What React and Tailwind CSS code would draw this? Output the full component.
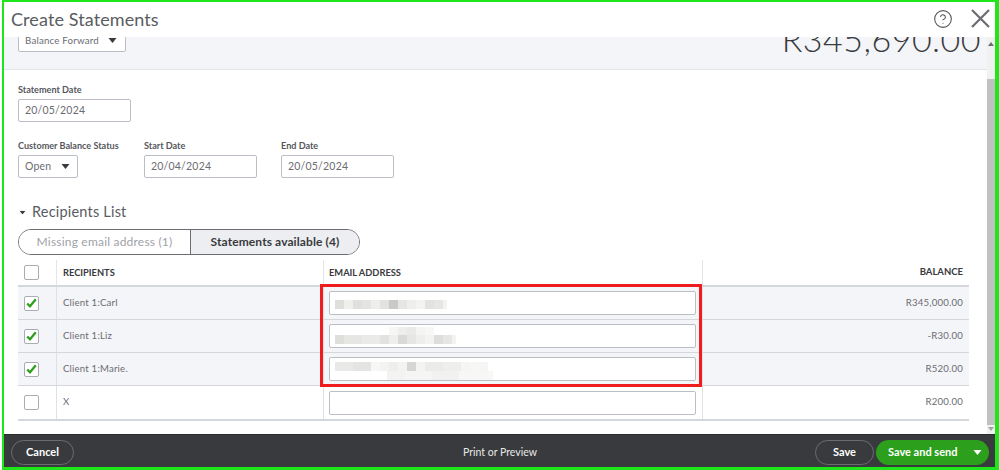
import { CircleHelp } from "lucide-react";

const rows = [
  { id: 1, name: "Client 1:Carl", balance: "R345,000.00", checked: true, blur: "carl" },
  { id: 2, name: "Client 1:Liz", balance: "-R30.00", checked: true, blur: "liz" },
  { id: 3, name: "Client 1:Marie.", balance: "R520.00", checked: true, blur: "marie" },
  { id: 4, name: "X", balance: "R200.00", checked: false, blur: null },
];

function Label({ children }) {
  return <div className="text-[9.1px] leading-[12px] font-bold text-[#55575c] mb-[3px] whitespace-nowrap">{children}</div>;
}

function DateInput({ value }) {
  return (
    <div className="w-[113px] h-[23px] border border-[#babec5] rounded-[2px] bg-white flex items-center pl-[6px] text-[10.5px] text-[#6b6c72] tracking-[0.2px]">
      {value}
    </div>
  );
}

function Caret({ className }) {
  return (
    <svg width="9" height="5" viewBox="0 0 9 5" className={className}>
      <path d="M0.5 0 L8.5 0 L4.5 5 Z" fill="currentColor" />
    </svg>
  );
}

function CheckBox({ checked }) {
  return (
    <div className="w-[15px] h-[15px] border border-[#a9acb2] rounded-[2px] bg-white flex items-center justify-center">
      {checked && (
        <svg width="11" height="10" viewBox="0 0 11 10">
          <path d="M1.2 5.4 L4 8.3 L9.8 1.2" fill="none" stroke="#2ca01c" strokeWidth="2.2" />
        </svg>
      )}
    </div>
  );
}

// pixelated email addresses
function Blur({ kind }) {
  if (kind === "carl") {
    return (
      <div className="h-full pl-[5px] pt-[8px]">
        <div className="flex h-[9px] blur-[0.5px]">
          <div className="w-[9px] bg-[#dededb]" />
          <div className="w-[9px] bg-[#efefed]" />
          <div className="w-[9px] bg-[#e0e0de]" />
          <div className="w-[9px] bg-[#e4e4e2]" />
          <div className="w-[9px] bg-[#eeeeec]" />
          <div className="w-[9px] bg-[#e2e2e0]" />
          <div className="w-[9px] bg-[#c9c9c7]" />
          <div className="w-[9px] bg-[#e6e6e4]" />
          <div className="w-[9px] bg-[#eeeeec]" />
          <div className="w-[9px] bg-[#f3f3f1]" />
          <div className="w-[9px] bg-[#e2e2e0]" />
          <div className="w-[9px] bg-[#e6e6e4]" />
          <div className="w-[4px] bg-[#f3f3f1]" />
        </div>
      </div>
    );
  }
  if (kind === "liz") {
    return (
      <div className="flex flex-col justify-end h-full pl-[5px] pb-[3px]">
        <div className="flex h-[8px] ml-[54px] blur-[0.5px]">
          <div className="w-[9px] bg-[#f6f6f4]" />
          <div className="w-[9px] bg-[#eeeeec]" />
          <div className="w-[9px] bg-[#e9e9e7]" />
          <div className="w-[9px] bg-[#f4f4f2]" />
          <div className="w-[9px] bg-[#f7f7f5]" />
        </div>
        <div className="flex h-[9px] blur-[0.5px]">
          <div className="w-[9px] bg-[#dededb]" />
          <div className="w-[18px] bg-[#e6e6e4]" />
          <div className="w-[18px] bg-[#eaeae8]" />
          <div className="w-[9px] bg-[#e2e2e0]" />
          <div className="w-[9px] bg-[#eeeeec]" />
          <div className="w-[9px] bg-[#d9d9d7]" />
          <div className="w-[9px] bg-[#e6e6e4]" />
          <div className="w-[9px] bg-[#eeeeec]" />
          <div className="w-[9px] bg-[#f3f3f1]" />
          <div className="w-[9px] bg-[#dededc]" />
          <div className="w-[9px] bg-[#e6e6e4]" />
          <div className="w-[4px] bg-[#f3f3f1]" />
        </div>
      </div>
    );
  }
  return (
    <div className="h-full pl-[5px] pt-[4px]">
      <div className="flex h-[9px] blur-[0.5px]">
        <div className="w-[18px] bg-[#e9e9e7]" />
        <div className="w-[18px] bg-[#e4e4e2]" />
        <div className="w-[9px] bg-[#f7f7f5]" />
        <div className="w-[9px] bg-[#f3f3f1]" />
        <div className="w-[9px] bg-[#eeeeec]" />
        <div className="w-[9px] bg-[#f3f3f1]" />
        <div className="w-[9px] bg-[#d6d6d4]" />
        <div className="w-[9px] bg-[#f3f3f1]" />
        <div className="w-[18px] bg-[#ebebe9]" />
        <div className="w-[18px] bg-[#eeeeec]" />
        <div className="w-[9px] bg-[#f5f5f3]" />
        <div className="w-[9px] bg-[#f7f7f5]" />
        <div className="w-[9px] bg-[#f5f5f3]" />
      </div>
      <div className="flex h-[9px] ml-[52px] blur-[0.5px]">
        <div className="w-[18px] bg-[#f3f3f1]" />
        <div className="w-[27px] bg-[#f5f5f3]" />
        <div className="w-[27px] bg-[#f1f1ef]" />
        <div className="w-[34px] bg-[#f7f7f5]" />
      </div>
    </div>
  );
}

export default function App() {
  return (
    <div className="w-[999px] h-[470px] bg-white pl-[2px] overflow-hidden font-['Lato',sans-serif]">
      <div className="relative w-[997px] h-[470px] flex flex-col border-t-2 border-l-2 border-r-4 border-b-[3px] border-[#1ee61a]">
        {/* Title bar */}
        <div className="h-[35px] shrink-0 flex items-center justify-between pl-[7px] pr-[5px] bg-white">
          <span className="text-[18px] text-[#5a5c61] tracking-[0.1px]">Create Statements</span>
          <div className="flex items-center gap-[18px] -mt-[2px]">
            <CircleHelp size={20} strokeWidth={1.3} className="text-[#55575c]" />
            <svg width="19" height="19" viewBox="0 0 19 19">
              <path d="M1 1 L18 18 M18 1 L1 18" stroke="#6b6c72" strokeWidth="2.2" fill="none" />
            </svg>
          </div>
        </div>

        <div className="flex-1 flex min-h-0">
          {/* Scrolled content */}
          <div className="w-[983px] overflow-hidden">
            <div className="h-[33px] bg-[#f4f5f8] border-b border-[#e3e5e9] overflow-hidden flex justify-between pl-[14px] pr-[6px]">
              <div className="w-[108px] h-[30px] -mt-[15px] border border-[#babec5] rounded-[2px] bg-white flex items-end justify-between pb-[3px] pl-[6px] pr-[8px] text-[9.7px] text-[#6b6c72] shrink-0">
                <span className="tracking-[0.2px]">Balance Forward</span>
                <Caret className="mb-[5px] text-[#393a3d]" />
              </div>
              <div className="text-[34px] leading-[40px] -mt-[18px] text-[#393a3d] font-light tracking-[0.5px] whitespace-nowrap">R345,690.00</div>
            </div>

            <div className="pl-[14px] pt-[14px]">
              <Label>Statement Date</Label>
              <DateInput value="20/05/2024" />

              <div className="flex mt-[18px]">
                <div className="w-[126px]">
                  <Label>Customer Balance Status</Label>
                  <div className="w-[60px] h-[23px] border border-[#babec5] rounded-[2px] bg-white flex items-center justify-between pl-[6px] pr-[7px] text-[10.5px] text-[#6b6c72]">
                    <span className="tracking-[0.2px]">Open</span>
                    <Caret className="text-[#393a3d]" />
                  </div>
                </div>
                <div className="w-[137px]">
                  <Label>Start Date</Label>
                  <DateInput value="20/04/2024" />
                </div>
                <div>
                  <Label>End Date</Label>
                  <DateInput value="20/05/2024" />
                </div>
              </div>

              <div className="flex items-center mt-[24px] h-[20px]">
                <Caret className="text-[#393a3d] scale-75" />
                <span className="ml-[5px] text-[14.5px] text-[#5a5c61] tracking-[0.2px]">Recipients List</span>
              </div>

              <div className="mt-[7px] w-[342px] h-[26px] rounded-full border border-[#6b6c72] flex overflow-hidden text-[12px]">
                <div className="w-[172px] bg-white flex items-center justify-center text-[#a0a2a7] border-r border-[#6b6c72] tracking-[0.2px]">Missing email address (1)</div>
                <div className="flex-1 bg-[#eceef1] flex items-center justify-center font-bold text-[#393a3d] tracking-[0.1px]">Statements available (4)</div>
              </div>

              {/* Table */}
              <div className="w-[951px] mt-[5px] border-b-2 border-[#d4d7dc]">
                <div className="grid grid-cols-[38px_267px_379px_267px] h-[27px] border-b-2 border-[#d4d7dc] text-[9.3px] font-bold text-[#393a3d]">
                  <div className="flex items-center pl-[6px]"><CheckBox checked={false} /></div>
                  <div className="flex items-center pl-[6px] border-l border-[#e3e5e9]">RECIPIENTS</div>
                  <div className="flex items-center pl-[5px] border-l border-[#e3e5e9]">EMAIL ADDRESS</div>
                  <div className="flex items-center justify-end pr-[6px] border-l border-[#e3e5e9] text-[9.5px]">BALANCE</div>
                </div>
                {rows.map((row, i) => (
                  <div
                    key={row.id}
                    className={`grid grid-cols-[38px_267px_379px_267px] h-[33px] text-[9.6px] text-[#6b6c72] tracking-[0.2px] ${row.checked ? "bg-[#f4f5f8]" : "bg-white"} ${i < 3 ? "border-b border-[#d4d7dc]" : ""}`}
                  >
                    <div className="flex items-center pl-[6px]"><CheckBox checked={row.checked} /></div>
                    <div className="flex items-center pl-[6px] border-l border-[#dfe1e5]">{row.name}</div>
                    <div className="flex items-center pl-[5px] border-l border-[#dfe1e5]">
                      <div className="w-[367px] h-[24px] border border-[#babec5] rounded-[2px] bg-white overflow-hidden">
                        {row.blur && <Blur kind={row.blur} />}
                      </div>
                    </div>
                    <div className="flex items-center justify-end pr-[6px] border-l border-[#dfe1e5]">{row.balance}</div>
                  </div>
                ))}
              </div>
            </div>
          </div>

          {/* Scrollbar */}
          <div className="w-[8px] bg-[#f1f1f1] flex flex-col items-center">
            <svg width="6" height="4" viewBox="0 0 6 4" className="mt-[5px]"><path d="M0 4 L3 0 L6 4 Z" fill="#6e6e6e" /></svg>
            <div className="w-full h-[346px] mt-[33px] bg-[#c1c1c1]" />
            <svg width="6" height="4" viewBox="0 0 6 4" className="mt-[2px]"><path d="M0 0 L3 4 L6 0 Z" fill="#a3a3a3" /></svg>
          </div>
        </div>

        {/* Footer */}
        <div className="h-[33px] shrink-0 bg-[#393a3d] border-t border-[#2b2c2e] grid grid-cols-3 items-center pt-[3px] pl-[7px] pr-[6px] text-[11px] text-white">
          <div>
            <button className="w-[63px] h-[25px] rounded-full border border-[#6b6c72] font-bold">Cancel</button>
          </div>
          <div className="text-center text-[10.5px] text-[#e8e8e8]">Print or Preview</div>
          <div className="flex justify-end gap-[2px]">
            <button className="w-[59px] h-[25px] rounded-full border border-[#6b6c72] font-bold">Save</button>
            <button className="w-[113px] h-[25px] rounded-full bg-[#2ca01c] font-bold flex items-center justify-between pl-[12px] pr-[7px]">
              <span>Save and send</span>
              <Caret className="text-white" />
            </button>
          </div>
        </div>

        {/* Red highlight over the email column */}
        <div className="absolute left-[316px] top-[282px] w-[382px] h-[103px] border-[3px] border-[#ee1c1c] pointer-events-none" />
      </div>
    </div>
  );
}
